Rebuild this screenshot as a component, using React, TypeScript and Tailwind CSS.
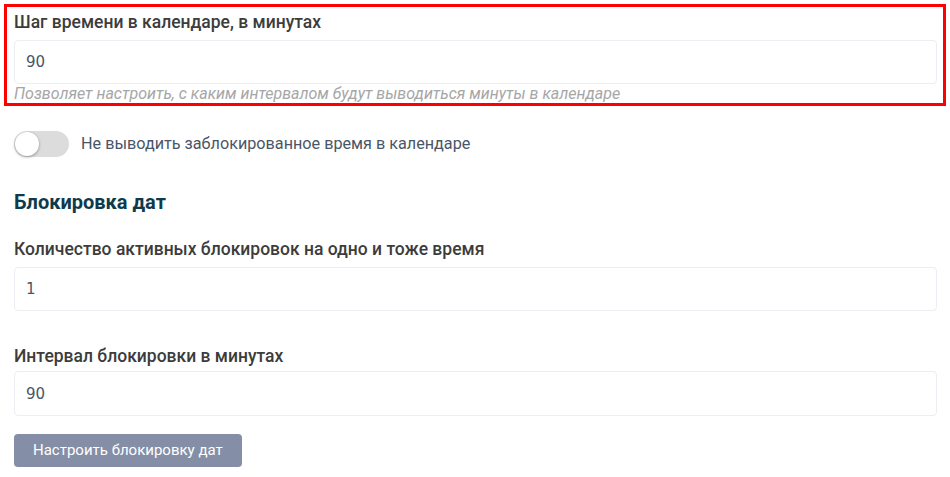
export default function App() {
  return (
    <div className="w-[950px] h-[477px] overflow-hidden bg-white font-['Roboto',sans-serif] pt-[4px]">
      {/* Highlighted field */}
      <div className="mx-[4px] border-[3px] border-[#ff0000] pl-[7px] pr-[6px] pt-[3px]">
        <label className="block text-[17.5px] leading-[24px] font-medium text-[#3c3c3c]">
          Шаг времени в календаре, в минутах
        </label>
        <input
          className="mt-[6px] block w-full h-[44px] rounded-[4px] border border-[#eceef4] px-[11px] text-[15px] text-[#4a5568] font-['DejaVu_Sans',sans-serif] outline-none"
          defaultValue="90"
        />
        <p className="text-[16px] leading-[19px] italic text-[#a6a6a6]">
          Позволяет настроить, с каким интервалом будут выводиться минуты в календаре
        </p>
      </div>

      <div className="pl-[14px] pr-[13px]">
        {/* Toggle */}
        <div className="mt-[25px] flex items-center gap-[12px]">
          <div className="relative w-[55px] h-[26px] rounded-full bg-[#dcdcdc]">
            <span className="absolute left-[1px] top-[1px] w-[24px] h-[24px] rounded-full bg-white shadow-[0_1px_3px_rgba(0,0,0,0.35)]" />
          </div>
          <span className="text-[16.2px] leading-[24px] text-[#4a5568]">Не выводить заблокированное время в календаре</span>
        </div>

        <h3 className="mt-[33px] text-[20px] leading-[24px] font-bold text-[#0f3a4c]">Блокировка дат</h3>

        <div className="mt-[23px]">
          <label className="block text-[17.5px] leading-[24px] font-medium text-[#3c3c3c]">
            Количество активных блокировок на одно и тоже время
          </label>
          <input
            className="mt-[6px] block w-full h-[44px] rounded-[4px] border border-[#eceef4] px-[11px] text-[15px] text-[#4a5568] font-['DejaVu_Sans',sans-serif] outline-none"
            defaultValue="1"
          />
        </div>

        <div className="mt-[33px]">
          <label className="block text-[17.5px] leading-[24px] font-medium text-[#3c3c3c]">
            Интервал блокировки в минутах
          </label>
          <input
            className="mt-[3px] block w-full h-[45px] rounded-[4px] border border-[#eceef4] px-[11px] text-[15px] text-[#4a5568] font-['DejaVu_Sans',sans-serif] outline-none"
            defaultValue="90"
          />
        </div>

        <button className="mt-[18px] h-[33px] px-[19px] rounded-[4px] bg-[#848ea6] text-white text-[15px]">
          Настроить блокировку дат
        </button>
      </div>
    </div>
  );
}
